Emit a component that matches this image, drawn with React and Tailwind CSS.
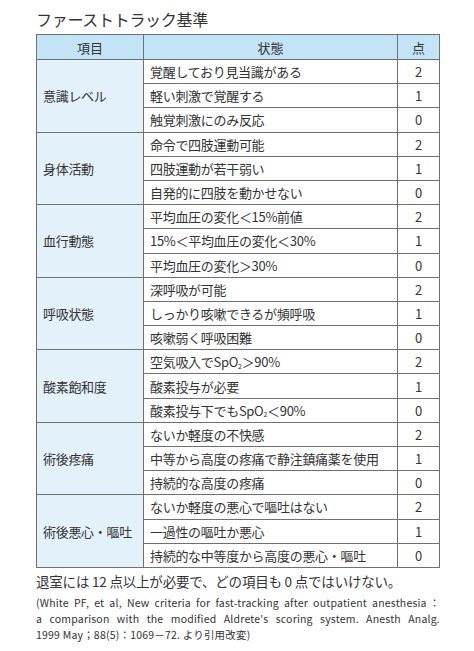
import React from 'react';

const groups = [
  {
    name: '意識レベル',
    rows: [
      ['覚醒しており見当識がある', 2],
      ['軽い刺激で覚醒する', 1],
      ['触覚刺激にのみ反応', 0],
    ],
  },
  {
    name: '身体活動',
    rows: [
      ['命令で四肢運動可能', 2],
      ['四肢運動が若干弱い', 1],
      ['自発的に四肢を動かせない', 0],
    ],
  },
  {
    name: '血行動態',
    rows: [
      ['平均血圧の変化＜15%前値', 2],
      ['15%＜平均血圧の変化＜30%', 1],
      ['平均血圧の変化＞30%', 0],
    ],
  },
  {
    name: '呼吸状態',
    rows: [
      ['深呼吸が可能', 2],
      ['しっかり咳嗽できるが頻呼吸', 1],
      ['咳嗽弱く呼吸困難', 0],
    ],
  },
  {
    name: '酸素飽和度',
    rows: [
      [<>空気吸入でSpO<sub className="text-[7px] align-baseline">2</sub>＞90%</>, 2],
      ['酸素投与が必要', 1],
      [<>酸素投与下でもSpO<sub className="text-[7px] align-baseline">2</sub>＜90%</>, 0],
    ],
  },
  {
    name: '術後疼痛',
    rows: [
      ['ないか軽度の不快感', 2],
      ['中等から高度の疼痛で静注鎮痛薬を使用', 1],
      ['持続的な高度の疼痛', 0],
    ],
  },
  {
    name: '術後悪心・嘔吐',
    rows: [
      ['ないか軽度の悪心で嘔吐はない', 2],
      ['一過性の嘔吐か悪心', 1],
      ['持続的な中等度から高度の悪心・嘔吐', 0],
    ],
  },
];

const App = () => {
  return (
    <div
      className="w-[474px] h-[651px] bg-white text-[#333] px-[36px] pt-[9px]"
      style={{ fontFamily: '"Noto Sans CJK JP", "Noto Sans", sans-serif' }}
    >
      {/* Title */}
      <h1 className="text-[16px] leading-[21px] tracking-[-0.3px] mb-[4px]">ファーストトラック基準</h1>

      {/* Criteria table */}
      <table className="w-[404px] border-collapse border border-[#707070] text-[13px]">
        <colgroup>
          <col className="w-[107px]" />
          <col className="w-[254px]" />
          <col />
        </colgroup>
        <thead>
          <tr className="h-[25px] bg-[#c3e4f7]">
            <th className="border border-[#707070] font-normal leading-none">項目</th>
            <th className="border border-[#707070] font-normal leading-none">状態</th>
            <th className="border border-[#707070] font-normal leading-none">点</th>
          </tr>
        </thead>
        <tbody>
          {groups.map((g) =>
            g.rows.map(([text, pt], i) => (
              <tr key={g.name + i} className="h-[24.2px]">
                {i === 0 && (
                  <td
                    rowSpan={3}
                    className="border border-[#707070] bg-[#e3f1fa] pl-[6px] leading-none tracking-[-0.3px]"
                  >
                    {g.name}
                  </td>
                )}
                <td className="border border-[#707070] pl-[6px] leading-none tracking-[-0.3px]">{text}</td>
                <td className="border border-[#707070] text-center leading-none">{pt}</td>
              </tr>
            ))
          )}
        </tbody>
      </table>

      {/* Notes */}
      <p className="text-[13.5px] leading-[18px] mt-[4px] tracking-[-0.2px]">
        退室には 12 点以上が必要で、どの項目も 0 点ではいけない。
      </p>
      <div className="text-[10.5px] leading-[16px] mt-[5px] w-[404px] tracking-[0.2px]">
        <p className="text-justify [text-align-last:justify]">
          (White PF,  et al, New criteria for fast-tracking after outpatient anesthesia：
        </p>
        <p className="text-justify [text-align-last:justify]">
          a comparison with the modified Aldrete's scoring system. Anesth Analg.
        </p>
        <p>1999 May；88(5)：1069－72. より引用改変)</p>
      </div>
    </div>
  );
};

export default App;
